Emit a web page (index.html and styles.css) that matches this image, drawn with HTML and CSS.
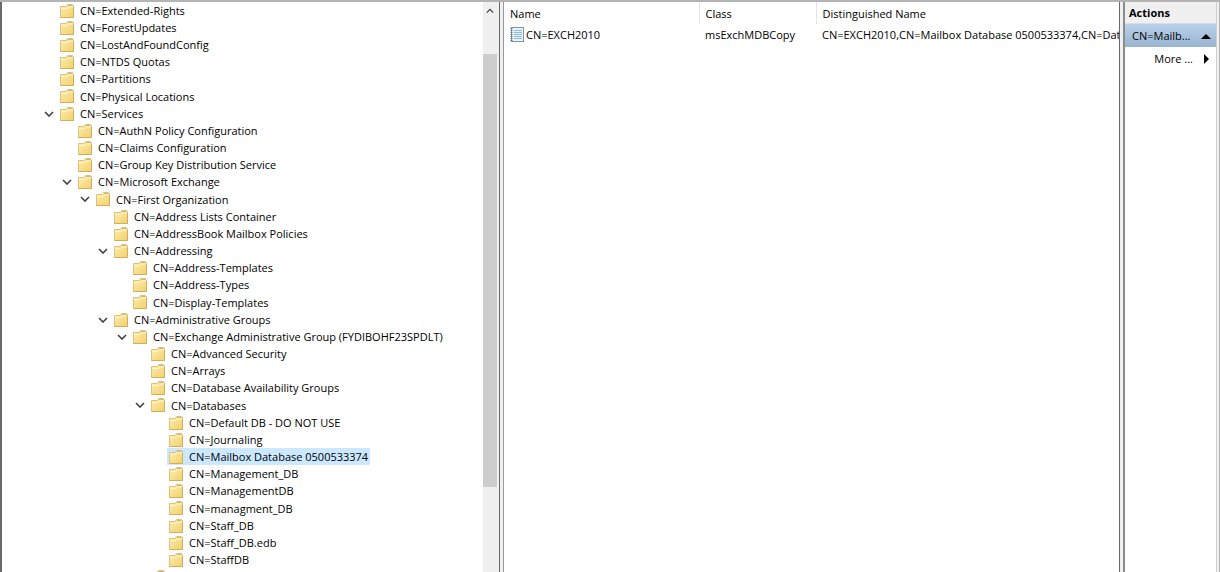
FILE: index.html
```html
<!DOCTYPE html>
<html lang="en">
<head>
  <meta charset="UTF-8" />
  <meta name="viewport" content="width=device-width, initial-scale=1.0"/>
  <title>ADSI Edit</title>
  <link rel="stylesheet" href="styles.css">
</head>
<body>
<svg class="defs" aria-hidden="true">
  <defs>
    <linearGradient id="paper" x1="0" y1="0" x2="1" y2="1">
      <stop offset="0" stop-color="#fdeeb0"/>
      <stop offset="1" stop-color="#f3d06c"/>
    </linearGradient>
  </defs>
  <symbol id="folder" viewBox="0 0 14 14">
    <path d="M.5 2.5H6L7.5.5H12.5L13.5 2V13.5H.5Z" fill="url(#paper)" stroke="#dcc27a"/>
    <path d="M1 4.5H7L8.5 3H13" fill="none" stroke="#fff6cf"/>
    <path d="M8 1.5H12.5" stroke="#c9b98a"/>
    <path d="M.5 13.5H13.5V3" fill="none" stroke="#cfae5c"/>
  </symbol>
  <symbol id="chevron" viewBox="0 0 10 6">
    <path d="M1 1L5 5L9 1" fill="none" stroke="#404040" stroke-width="1.6"/>
  </symbol>
</svg>

<div id="app" role="main">
  <div class="tree-pane">
    <ul class="tree" id="tree" role="tree" aria-label="Console tree"></ul>
    <div class="scrollbar">
      <button class="scroll-up" aria-label="Scroll up"><svg><use href="#chevron"/></svg></button>
      <div class="thumb"></div>
    </div>
  </div>

  <div class="list-pane">
    <table>
      <thead>
        <tr><th class="col-name">Name</th><th class="col-class">Class</th><th>Distinguished Name</th></tr>
      </thead>
      <tbody>
        <tr>
          <td class="name-cell">
            <svg class="record" viewBox="0 0 14 15" aria-hidden="true">
              <rect x="1.5" y=".5" width="12" height="14" fill="#e8f3fa" stroke="#8295a5"/>
              <path d="M4 3.5H12M4 5.5H12M4 7.5H12M4 9.5H12M4 11.5H12" stroke="#8fb9d6"/>
              <path d="M1.5 1V14" stroke="#66717b" stroke-width="2" stroke-dasharray="1 1"/>
            </svg>
            CN=EXCH2010
          </td>
          <td>msExchMDBCopy</td>
          <td>CN=EXCH2010,CN=Mailbox Database 0500533374,CN=Dat</td>
        </tr>
      </tbody>
    </table>
  </div>

  <div class="actions-pane">
    <h2>Actions</h2>
    <button class="action-group">CN=Mailb...<svg viewBox="0 0 10 10"><path d="M0 8L5 3L10 8Z"/></svg></button>
    <button class="action-item">More ...<svg viewBox="0 0 10 10"><path d="M3 0L8 5L3 10Z"/></svg></button>
  </div>
</div>

<script>
// [level, name, state]
const nodes = [
  [0, "Extended-Rights"],
  [0, "ForestUpdates"],
  [0, "LostAndFoundConfig"],
  [0, "NTDS Quotas"],
  [0, "Partitions"],
  [0, "Physical Locations"],
  [0, "Services", "open"],
  [1, "AuthN Policy Configuration"],
  [1, "Claims Configuration"],
  [1, "Group Key Distribution Service"],
  [1, "Microsoft Exchange", "open"],
  [2, "First Organization", "open"],
  [3, "Address Lists Container"],
  [3, "AddressBook Mailbox Policies"],
  [3, "Addressing", "open"],
  [4, "Address-Templates"],
  [4, "Address-Types"],
  [4, "Display-Templates"],
  [3, "Administrative Groups", "open"],
  [4, "Exchange Administrative Group (FYDIBOHF23SPDLT)", "open"],
  [5, "Advanced Security"],
  [5, "Arrays"],
  [5, "Database Availability Groups"],
  [5, "Databases", "open"],
  [6, "Default DB - DO NOT USE"],
  [6, "Journaling"],
  [6, "Mailbox Database 0500533374", "selected"],
  [6, "Management_DB"],
  [6, "ManagementDB"],
  [6, "managment_DB"],
  [6, "Staff_DB"],
  [6, "Staff_DB.edb"],
  [6, "StaffDB"],
  [5, "ELC Folders Container"]
];

const chevron = '<button class="toggle" aria-label="Collapse"><svg><use href="#chevron"/></svg></button>';

document.getElementById('tree').innerHTML = nodes.map(([level, name, state]) => `
  <li class="level-${level}" role="treeitem" aria-level="${level + 1}" aria-selected="${state === "selected"}">
    ${state === "open" ? chevron : '<span class="toggle"></span>'}
    <span class="node"><svg class="folder"><use href="#folder"/></svg>CN=${name}</span>
  </li>`).join('');
</script>
</body>
</html>
```
FILE: styles.css
```css
:root {
  --chrome: #f0f0f0;
  --edge: #b4b4b4;
  --edge-dark: #696969;
  --text: #000;
  --selected: #cce8ff;
}

* {
  box-sizing: border-box;
}

body {
  margin: 0;
  font-family: "Segoe UI", "Open Sans", "Noto Sans", sans-serif;
  font-size: 11px;
  color: var(--text);
  background: var(--chrome);
}

button {
  font: inherit;
  color: inherit;
  border: none;
  padding: 0;
  background: none;
}

svg {
  display: block;
  flex: none;
}

.defs {
  position: absolute;
  width: 0;
  height: 0;
}

#app {
  display: flex;
  gap: 3px;
  height: 100vh;
  overflow: hidden;
  border-top: 2px solid var(--edge);
  border-right: 1px solid var(--edge);
}

/* console tree */
.tree-pane {
  display: flex;
  flex: none;
  width: 500px;
  background: #fff;
  border-left: 2px solid var(--edge-dark);
  border-right: 1px solid var(--edge-dark);
}

.tree {
  flex: 1;
  margin: 0;
  padding: 0 0 0 38px;
  list-style: none;
  overflow: hidden;
}

.tree li {
  display: flex;
  height: 17px;
  white-space: nowrap;
}

.tree li:nth-child(6n) {
  height: 18px;
}

.level-1 { padding-left: 18px; }
.level-2 { padding-left: 36px; }
.level-3 { padding-left: 54px; }
.level-4 { padding-left: 73px; }
.level-5 { padding-left: 91px; }
.level-6 { padding-left: 109px; }

.toggle {
  display: flex;
  align-items: center;
  justify-content: center;
  width: 18px;
}

.toggle svg {
  width: 10px;
  height: 6px;
}

.node {
  display: flex;
  align-items: center;
  gap: 6px;
  padding: 0 2px;
}

.folder {
  width: 14px;
  height: 14px;
}

[aria-selected="true"] .node {
  background: var(--selected);
}

.scrollbar {
  display: flex;
  flex-direction: column;
  width: 16px;
  padding-right: 2px;
  background: var(--chrome);
}

.scroll-up {
  display: flex;
  justify-content: center;
  height: 52px;
  padding-top: 6px;
}

.scroll-up svg {
  width: 8px;
  height: 6px;
  transform: rotate(180deg);
}

.thumb {
  height: 76%;
  background: #cdcdcd;
}

/* result list */
.list-pane {
  flex: 1;
  min-width: 0;
  overflow: hidden;
  background: #fff;
  border-left: 1px solid #999;
  border-right: 1px solid var(--edge-dark);
}

table {
  width: 100%;
  table-layout: fixed;
  border-collapse: collapse;
}

th, td {
  height: 22px;
  padding: 0 0 0 6px;
  font-weight: normal;
  text-align: left;
  white-space: nowrap;
  overflow: hidden;
}

th {
  border-right: 1px solid #e5e5e5;
}

th:last-child {
  border-right: none;
}

td {
  height: 20px;
}

.col-name {
  width: 195px;
}

.col-class {
  width: 117px;
}

.name-cell {
  display: flex;
  align-items: center;
  gap: 2px;
}

.record {
  width: 14px;
  height: 15px;
}

/* actions */
.actions-pane {
  flex: none;
  width: 94px;
  margin-right: 2px;
  background: #fff;
  border-left: 2px solid #8c8c8c;
  border-right: 1px solid #d0d0d0;
}

.actions-pane h2 {
  margin: 0;
  padding-left: 4px;
  font-size: 11px;
  line-height: 21px;
  background: var(--chrome);
  border-bottom: 1px solid #ddd;
}

.action-group, .action-item {
  display: flex;
  align-items: center;
  justify-content: space-between;
  width: 100%;
  height: 23px;
  padding: 0 5px 0 7px;
}

.action-group {
  background: linear-gradient(to bottom, #b9d1ea, #99b4d1);
}

.action-item {
  justify-content: flex-end;
  gap: 8px;
}

.actions-pane svg {
  width: 10px;
  height: 10px;
  fill: #000;
}
```
